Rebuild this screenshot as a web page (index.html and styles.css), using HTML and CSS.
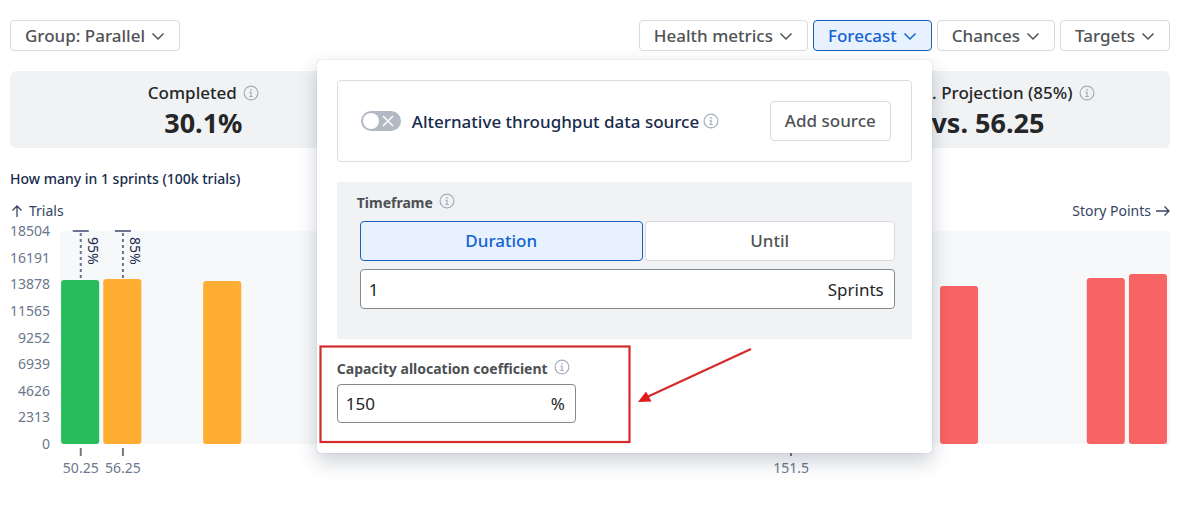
FILE: index.html
```html
<!DOCTYPE html>
<html lang="en">
<head>
<meta charset="utf-8">
<title>Forecast</title>
<link rel="stylesheet" href="styles.css">
</head>
<body>
<svg class="defs" aria-hidden="true">
  <symbol id="chevron" viewBox="0 0 14 14"><path d="M1.5 4.5 7 10l5.500-5.500" fill="none" stroke="currentColor" stroke-width="1.500"/></symbol>
  <symbol id="info" viewBox="0 0 16 16"><circle cx="8" cy="8" r="6.900" fill="none" stroke="currentColor" stroke-width="1.200"/><circle cx="8" cy="4.800" r=".9" fill="currentColor"/><path d="M6.500 7.300H8v4M6.300 11.500h3.500" fill="none" stroke="currentColor" stroke-width="1.200"/></symbol>
</svg>
<main class="page">
  <header class="toolbar">
    <button class="btn" type="button">Group: Parallel <svg class="chevron"><use href="#chevron"/></svg></button>
    <nav class="menus">
      <button class="btn" type="button">Health metrics <svg class="chevron"><use href="#chevron"/></svg></button>
      <div class="menu">
        <button class="btn btn-active" type="button" aria-expanded="true">Forecast <svg class="chevron"><use href="#chevron"/></svg></button>
        <section class="popover" aria-label="Forecast">
          <div class="source">
            <label class="switch-label">
              <input class="switch-input" type="checkbox">
              <span class="switch"><svg class="switch-x" viewBox="0 0 12 12"><path d="M1 1l10 10M11 1 1 11" stroke="currentColor" stroke-width="1.500"/></svg></span>
              Alternative throughput data source
            </label>
            <svg class="info"><use href="#info"/></svg>
            <button class="btn btn-large source-add" type="button">Add source</button>
          </div>
          <div class="timeframe">
            <div class="field-head"><label for="duration">Timeframe</label><svg class="info"><use href="#info"/></svg></div>
            <div class="segments">
              <button class="btn btn-large btn-active segment" type="button">Duration</button>
              <button class="btn btn-large segment" type="button">Until</button>
            </div>
            <div class="field"><input class="field-input" id="duration" type="text" value="1"><span>Sprints</span></div>
          </div>
          <div class="capacity">
            <div class="field-head"><label for="capacity">Capacity allocation coefficient</label><svg class="info"><use href="#info"/></svg></div>
            <div class="field capacity-field"><input class="field-input" id="capacity" type="text" value="150"><span>%</span></div>
          </div>
          <svg class="callout" viewBox="0 0 615 393" aria-hidden="true">
            <rect x="3.500" y="286.500" width="309" height="95.500" fill="none" stroke="#d42a2a" stroke-width="2.200"/>
            <path d="M434 289 330 337" stroke="#d42a2a" stroke-width="2.200"/>
            <path d="M321 342l8-10.500 5.500 10z" fill="#e01b1b"/>
          </svg>
        </section>
      </div>
      <button class="btn" type="button">Chances <svg class="chevron"><use href="#chevron"/></svg></button>
      <button class="btn" type="button">Targets <svg class="chevron"><use href="#chevron"/></svg></button>
    </nav>
  </header>

  <section class="summary">
    <div class="stat">
      <div class="stat-name">Completed <svg class="info"><use href="#info"/></svg></div>
      <div class="stat-value">30.1%</div>
    </div>
    <div class="stat stat-last">
      <div class="stat-name">Target vs. Projection (85%) <svg class="info"><use href="#info"/></svg></div>
      <div class="stat-value">9 vs. 56.25</div>
    </div>
  </section>

  <section class="chart">
    <h2 class="chart-title">How many in 1 sprints (100k trials)</h2>
    <div class="axis-names">
      <span class="axis-name"><svg class="arrow" viewBox="0 0 14 14"><path d="M7 13V2M2.500 6.500 7 2l4.500 4.500" fill="none" stroke="currentColor" stroke-width="1.300"/></svg>Trials</span>
      <span class="axis-name">Story Points<svg class="arrow" viewBox="0 0 14 14"><path d="M0 7h13M8.500 2.500 13 7l-4.500 4.500" fill="none" stroke="currentColor" stroke-width="1.300"/></svg></span>
    </div>
    <div class="chart-body">
      <div class="y-axis">
        <span>18504</span><span>16191</span><span>13878</span><span>11565</span><span>9252</span><span>6939</span><span>4626</span><span>2313</span><span>0</span>
      </div>
      <svg class="plot">
        <rect class="plot-back" width="100%" height="213"/>
        <g class="bar-green"><rect x="0.1%" y="49" width="3.430%" height="164" rx="3"/></g>
        <g class="bar-amber">
          <rect x="3.900%" y="48" width="3.430%" height="165" rx="3"/>
          <rect x="12.900%" y="50" width="3.430%" height="163" rx="3"/>
        </g>
        <g class="bar-red">
          <rect x="79.280%" y="55" width="3.430%" height="158" rx="3"/>
          <rect x="92.500%" y="47" width="3.430%" height="166" rx="3"/>
          <rect x="96.300%" y="43" width="3.430%" height="170" rx="3"/>
        </g>
        <svg class="marker" x="1.870%"><path class="cap" d="M-8 0H8"/><path class="dash" d="M0 2V48"/><path class="tick" d="M0 217v8"/><text class="percent" transform="translate(7 6) rotate(90)">95%</text><text class="tick-label" y="242">50.25</text></svg>
        <svg class="marker" x="5.670%"><path class="cap" d="M-8 0H8"/><path class="dash" d="M0 2V48"/><path class="tick" d="M0 217v8"/><text class="percent" transform="translate(7 6) rotate(90)">85%</text><text class="tick-label" y="242">56.25</text></svg>
        <svg class="marker" x="65.860%"><path class="tick" d="M0 217v8"/><text class="tick-label" y="242">151.5</text></svg>
      </svg>
    </div>
  </section>
</main>
</body>
</html>
```
FILE: styles.css
```css
* { box-sizing: border-box; }

body {
  margin: 0;
  background: #fff;
  color: #242628;
  font-family: "Noto Sans", "Open Sans", sans-serif;
  font-size: 17px;
}

.defs { position: absolute; width: 0; height: 0; }

.page { padding: 20px 20px 20px 10px; }

.toolbar, .menus { display: flex; gap: 5px; }
.toolbar { justify-content: space-between; }
.menu { position: relative; }

.btn {
  display: inline-flex;
  align-items: center;
  justify-content: center;
  gap: 6px;
  height: 31px;
  padding: 0 14px;
  border: 1px solid #d8dadd;
  border-radius: 4px;
  background: #fff;
  color: #505356;
  font: 500 17px/24px "Noto Sans", "Open Sans", sans-serif;
  white-space: nowrap;
}
.btn-large { height: 40px; }
.btn-active { border-color: #1a5fb8; background: #e8f2ff; color: #1363d2; }

.chevron { width: 14px; height: 14px; }
.info { flex: none; width: 16px; height: 16px; color: #a5adba; }

.popover {
  position: absolute;
  z-index: 2;
  top: 40px;
  right: 0;
  width: 615px;
  padding: 20px 20px 30px;
  border-radius: 4px;
  background: #fff;
  box-shadow: 0 0 1px #9aa1b0, 0 8px 20px rgba(9, 30, 66, .22);
}

.source {
  display: flex;
  align-items: center;
  gap: 4px;
  padding: 20px 20px 20px 23px;
  border: 1px solid #dadddf;
  border-radius: 4px;
}
.source-add { margin-left: auto; }

.switch-label {
  display: flex;
  align-items: center;
  gap: 11px;
  color: #172b4d;
  font-weight: 500;
  white-space: nowrap;
}
.switch-input { position: absolute; opacity: 0; }
.switch {
  display: flex;
  align-items: center;
  justify-content: space-between;
  width: 40px;
  height: 20px;
  padding: 2px 7px 2px 2px;
  border-radius: 10px;
  background: #b3b9c4;
  color: #fff;
}
.switch::before {
  content: "";
  width: 16px;
  height: 16px;
  border-radius: 50%;
  background: #fff;
}
.switch-x { width: 12px; height: 12px; }

.timeframe {
  margin-top: 20px;
  padding: 9px 17px 30px 20px;
  background: #f1f2f4;
}

.field-head {
  display: flex;
  gap: 6px;
  height: 30px;
  color: #4d5053;
  font-size: 14px;
  font-weight: 700;
  line-height: 24px;
}
.field-head .info { margin-top: 2px; }

.segments { display: flex; gap: 2px; margin: 0 0 8px 3px; }
.segment { flex: 250 1 0; padding: 0; }
.segment:first-child { flex-grow: 283; }

.field {
  display: flex;
  align-items: center;
  height: 40px;
  margin-left: 3px;
  padding: 0 10px 0 8px;
  border: 1px solid #85888c;
  border-radius: 4px;
  background: #fff;
}
.field-input {
  flex: 1;
  min-width: 0;
  padding: 0;
  border: 0;
  outline: 0;
  background: none;
  color: inherit;
  font: inherit;
}

.capacity { padding-top: 18px; }
.capacity .field-head { height: 27px; }
.capacity-field { width: 239px; height: 39px; margin-left: 0; }

.callout { position: absolute; top: 0; left: 0; width: 615px; height: 393px; pointer-events: none; }

.summary {
  display: grid;
  grid-template-columns: repeat(3, 1fr);
  margin-top: 20px;
  padding: 9px 0;
  border-radius: 6px;
  background: #f1f2f4;
}
.stat { display: flex; flex-direction: column; align-items: center; }
.stat-last { grid-column: 3; }
.stat-name { display: flex; align-items: center; gap: 6px; font-weight: 500; line-height: 26px; }
.stat-value { font-size: 27px; font-weight: 700; line-height: 33px; }

.chart { color: #344563; font-size: 14px; }
.chart-title {
  margin: 20px 0 0;
  color: #172b4d;
  font-size: 14px;
  font-weight: 500;
  line-height: 22px;
}
.axis-names { display: flex; justify-content: space-between; margin-top: 10px; line-height: 22px; }
.axis-name { display: flex; align-items: center; gap: 5px; }
.arrow { width: 14px; height: 14px; }

.chart-body { display: flex; gap: 10px; color: #6b778c; }
.y-axis {
  display: flex;
  flex-direction: column;
  justify-content: space-between;
  width: 40px;
  height: 231px;
  line-height: 18px;
  text-align: right;
}
.plot { flex: 1; min-width: 0; height: 250px; margin-top: 9px; overflow: visible; }
.plot-back { fill: #f7f8f9; }
.bar-green { fill: #27bc5c; }
.bar-amber { fill: #ffae33; }
.bar-red { fill: #f86363; }
.marker { overflow: visible; }
.cap, .tick, .dash { fill: none; stroke: #6b7390; stroke-width: 2px; }
.tick { stroke: #777; }
.dash { stroke-dasharray: 3 3; }
.percent { fill: #172b4d; }
.tick-label { fill: #6b778c; text-anchor: middle; }
```
